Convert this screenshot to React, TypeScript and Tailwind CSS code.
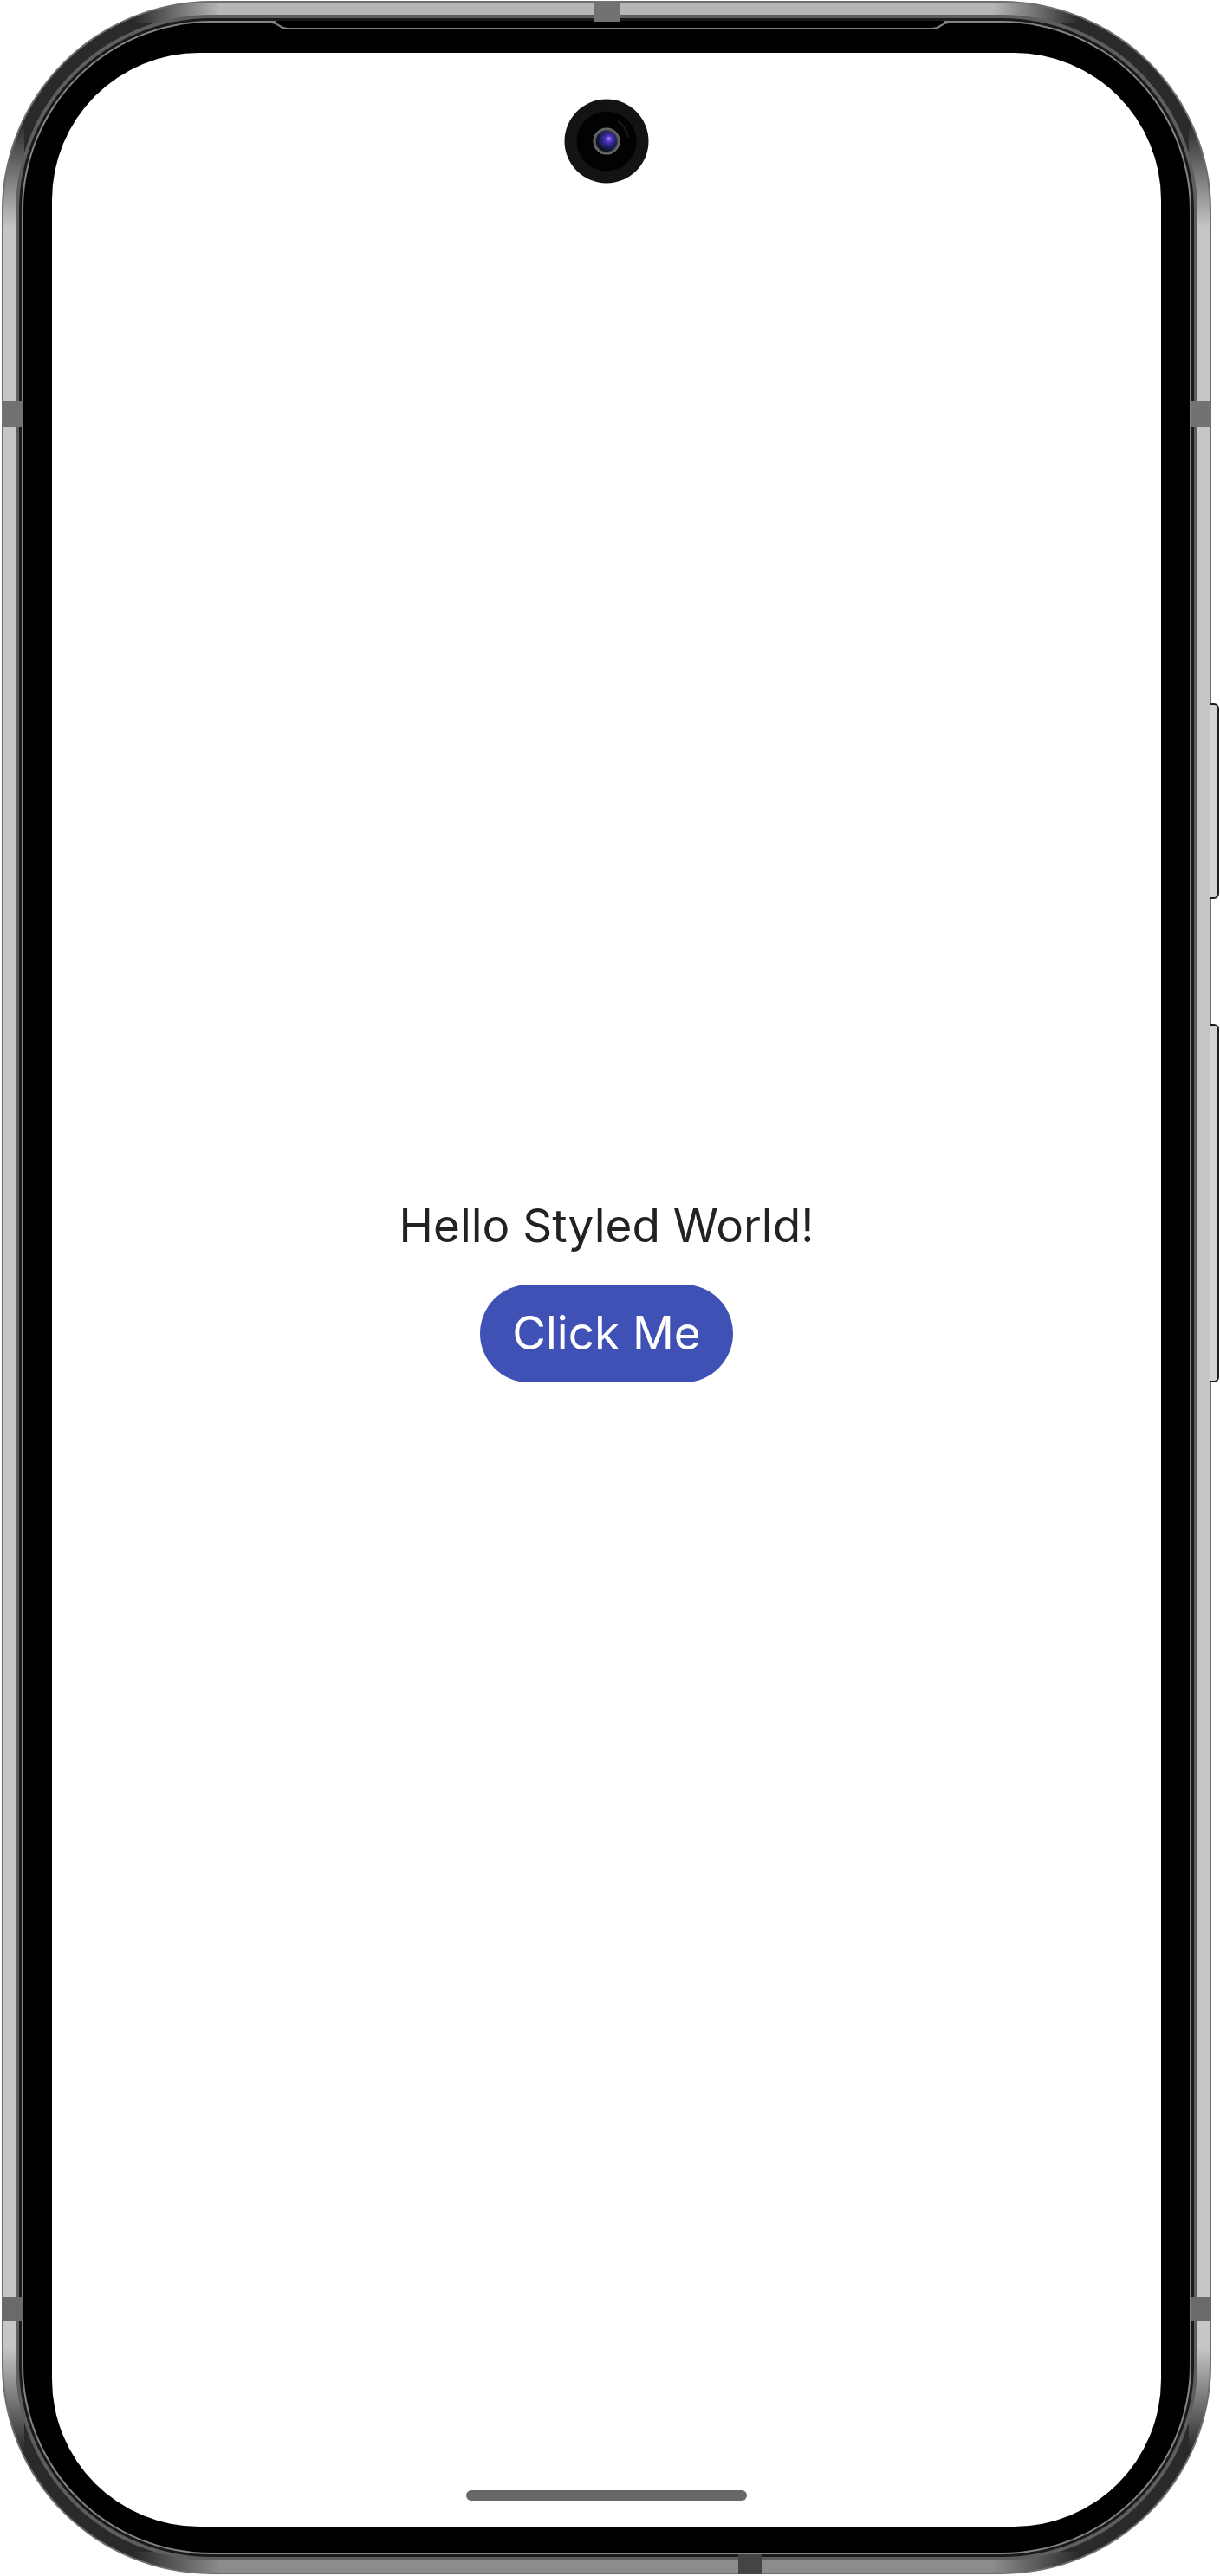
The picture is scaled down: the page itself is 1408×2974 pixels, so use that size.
import React from "react";

function Camera() {
  return (
    <svg width="98" height="98" viewBox="0 0 98 98" className="block">
      <defs>
        <radialGradient id="lens" cx="0.6" cy="0.4" r="0.7">
          <stop offset="0" stopColor="#7a4ff0" />
          <stop offset="0.35" stopColor="#3a2a9a" />
          <stop offset="0.7" stopColor="#101a3a" />
          <stop offset="1" stopColor="#05070f" />
        </radialGradient>
        <radialGradient id="ring" cx="0.5" cy="0.5" r="0.5">
          <stop offset="0.75" stopColor="#3a3a3a" />
          <stop offset="1" stopColor="#7a7a7a" />
        </radialGradient>
      </defs>
      <circle cx="49" cy="49" r="48.5" fill="#131313" />
      <circle cx="49" cy="49" r="34.5" fill="#020202" />
      <path d="M 62 26 A 28 28 0 0 1 74 44" stroke="#1c1c1c" strokeWidth="2" fill="none" />
      <circle cx="49" cy="49" r="15.5" fill="url(#ring)" />
      <circle cx="49" cy="49" r="12" fill="url(#lens)" />
      <circle cx="52" cy="46" r="2.2" fill="#9a7bff" opacity="0.8" />
    </svg>
  );
}

export default function App() {
  return (
    <div className="relative w-[1408px] h-[2974px] bg-white pt-[1px] pl-[2px] font-['Inter',sans-serif]">
      {/* phone body */}
      <div className="w-[1396px] h-[2971px] rounded-[242px] bg-[#6e6e6e] p-[2px]">
        <div className="w-full h-full rounded-[240px] p-[14px] [background:linear-gradient(to_bottom,transparent_140px,#c6c6c6_260px,#c6c6c6_calc(100%_-_260px),transparent_calc(100%_-_140px))_left/24px_100%_no-repeat,linear-gradient(to_bottom,transparent_140px,#c6c6c6_260px,#c6c6c6_calc(100%_-_260px),transparent_calc(100%_-_140px))_right/24px_100%_no-repeat,linear-gradient(to_right,transparent_150px,#b6b6b6_250px,#b6b6b6_calc(100%_-_250px),transparent_calc(100%_-_150px))_top/100%_24px_no-repeat,linear-gradient(to_right,transparent_150px,#8c8c8c_250px,#8c8c8c_calc(100%_-_250px),transparent_calc(100%_-_150px))_bottom/100%_24px_no-repeat,#2a2a2a]">
          <div className="w-full h-full rounded-[226px] bg-[#5e5e5e] p-[4px]">
            <div className="w-full h-full rounded-[222px] bg-[#1a1a1a] p-[3px]">
              <div className="w-full h-full rounded-[219px] bg-[#858585] p-[2px]">
                <div className="w-full h-full rounded-[217px] bg-black pt-[35px] pb-[30px] px-[33px]">
                  {/* screen */}
                  <div className="relative w-full h-full rounded-[170px] bg-white flex flex-col items-center justify-center">
                    <div className="absolute top-[53px] left-1/2 -translate-x-1/2">
                      <Camera />
                    </div>
                    <p className="text-[53px] leading-[64px] text-[#222222]">Hello Styled World!</p>
                    <button className="mt-[36px] h-[113px] px-[37px] rounded-full bg-[#3f51b5] text-white text-[53px] leading-[64px] flex items-center">
                      Click Me
                    </button>
                    <div className="absolute bottom-[30px] left-1/2 -translate-x-1/2 w-[324px] h-[12px] rounded-full bg-[#686868]" />
                  </div>
                </div>
              </div>
            </div>
          </div>
        </div>
      </div>

      {/* top stepped line detail */}
      <svg className="absolute left-0 top-0" width="1408" height="40" viewBox="0 0 1408 40">
        <rect x="318" y="24" width="772" height="8" fill="#000" />
        <path
          d="M 300 26 L 313 26 C 322 26 322 33 332 33 L 1076 33 C 1086 33 1086 26 1095 26 L 1108 26"
          stroke="#808080"
          strokeWidth="2"
          fill="none"
        />
      </svg>

      {/* antenna bands */}
      <div className="absolute left-[2px] top-[463px] w-[24px] h-[30px] bg-[#727272]" />
      <div className="absolute left-[1374px] top-[463px] w-[24px] h-[30px] bg-[#727272]" />
      <div className="absolute left-[2px] top-[2652px] w-[24px] h-[28px] bg-[#6a6a6a]" />
      <div className="absolute left-[1374px] top-[2652px] w-[24px] h-[28px] bg-[#6a6a6a]" />
      <div className="absolute left-[685px] top-[1px] w-[30px] h-[24px] bg-[#727272]" />
      <div className="absolute left-[852px] top-[2949px] w-[28px] h-[23px] bg-[#444444]" />

      {/* side buttons */}
      <div className="absolute left-[1397px] top-[812px] w-[10px] h-[226px] rounded-r-[6px] border-[2px] border-l-0 border-[#1c1c1c] bg-[#d4d4d4]" />
      <div className="absolute left-[1397px] top-[1182px] w-[10px] h-[414px] rounded-r-[6px] border-[2px] border-l-0 border-[#1c1c1c] bg-[#d4d4d4]" />
    </div>
  );
}
